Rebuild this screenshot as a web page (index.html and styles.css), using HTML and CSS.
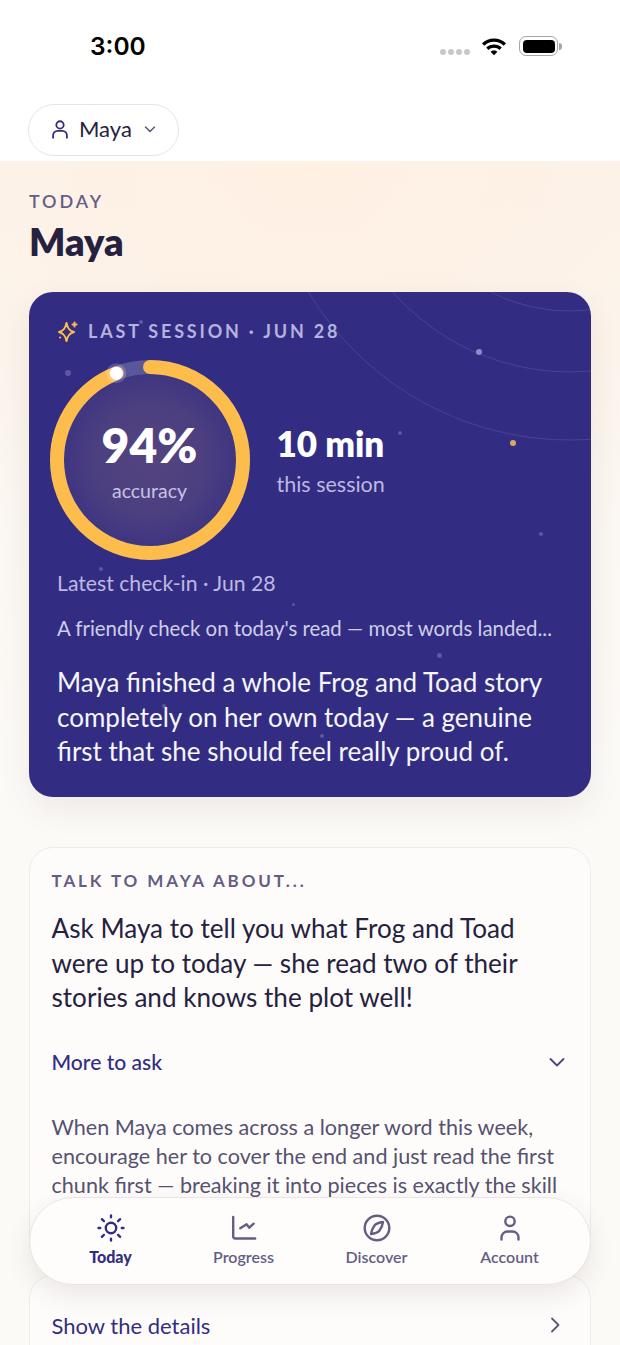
FILE: index.html
```html
<!DOCTYPE html>
<html lang="en">
<head>
    <meta charset="UTF-8">
    <meta name="viewport" content="width=device-width, initial-scale=1.0">
    <title>Today</title>
    <link rel="stylesheet" href="styles.css">
</head>
<body>
    <div class="screen">
        <div class="status-bar">
            <span class="clock">3:00</span>
            <div class="status-icons">
                <div class="signal"><i></i><i></i><i></i><i></i></div>
                <svg class="wifi" width="28" height="20" viewBox="0 0 28 20">
                    <path d="M14 2.500c4.600 0 8.800 1.800 12 4.800l-2.300 2.400C21.100 7.300 17.700 5.800 14 5.800S6.900 7.300 4.300 9.700L2 7.300c3.200-3 7.400-4.800 12-4.800z"/>
                    <path d="M14 8.500c3 0 5.700 1.100 7.800 3l-2.300 2.400c-1.500-1.300-3.400-2.100-5.500-2.100s-4 .8-5.500 2.100l-2.300-2.400c2.100-1.900 4.800-3 7.800-3z"/>
                    <path d="M14 14.500c1.300 0 2.500.5 3.400 1.300L14 19.300l-3.400-3.500c.9-.8 2.100-1.300 3.400-1.300z"/>
                </svg>
                <div class="battery"><div class="battery-fill"></div></div>
                <div class="battery-cap"></div>
            </div>
        </div>

        <header class="top-bar">
            <button class="child-pill">
                <svg width="22" height="22" viewBox="0 0 24 24" fill="none" stroke="#322d83" stroke-width="2" stroke-linecap="round">
                    <circle cx="12" cy="7.500" r="4"/>
                    <path d="M4.500 21.500v-2.500a5 5 0 0 1 5-5h5a5 5 0 0 1 5 5v2.500"/>
                </svg>
                <span>Maya</span>
                <svg width="14" height="14" viewBox="0 0 14 14" fill="none" stroke="#5c5778" stroke-width="1.500" stroke-linecap="round" stroke-linejoin="round">
                    <path d="M2.500 5l4.500 4.500L11.500 5"/>
                </svg>
            </button>
        </header>

        <main class="content">
            <p class="eyebrow">TODAY</p>
            <h1>Maya</h1>

            <section class="hero-card">
                <svg class="orbits" width="562" height="505" viewBox="0 0 562 505" fill="none" stroke="#fff" stroke-opacity="0.11">
                    <circle cx="541" cy="-157" r="176"/>
                    <circle cx="541" cy="-157" r="237"/>
                    <circle cx="541" cy="-157" r="305"/>
                </svg>
                <span class="star" style="left: 36px; top: 78px; width: 6px; height: 6px;"></span>
                <span class="star" style="left: 110px; top: 28px; width: 4px; height: 4px;"></span>
                <span class="star bright" style="left: 447px; top: 57px; width: 6px; height: 6px;"></span>
                <span class="star amber" style="left: 481px; top: 148px; width: 6px; height: 6px;"></span>
                <span class="star" style="left: 369px; top: 139px; width: 4px; height: 4px;"></span>
                <span class="star" style="left: 510px; top: 240px; width: 4px; height: 4px;"></span>
                <span class="star" style="left: 70px; top: 275px; width: 4px; height: 4px;"></span>
                <span class="star" style="left: 263px; top: 311px; width: 3px; height: 3px;"></span>
                <span class="star" style="left: 408px; top: 361px; width: 5px; height: 5px;"></span>
                <span class="star" style="left: 133px; top: 412px; width: 4px; height: 4px;"></span>
                <span class="star" style="left: 291px; top: 442px; width: 4px; height: 4px;"></span>

                <div class="hero-label">
                    <svg width="22" height="22" viewBox="0 0 22 22" fill="none" stroke="#fdbd4c" stroke-width="2" stroke-linejoin="round" stroke-linecap="round">
                        <path d="M9.500 3C10.500 8 12 10.500 17 12C12 13.500 10.500 16 9.500 21C8.500 16 7 13.500 2 12C7 10.500 8.500 8 9.500 3z"/>
                        <path d="M17.500 2.500v4M15.500 4.500h4"/>
                        <path d="M3 17.500h.1"/>
                    </svg>
                    <span>LAST SESSION · JUN 28</span>
                </div>

                <div class="hero-stats">
                    <div class="ring">
                        <svg width="200" height="200" viewBox="0 0 200 200" fill="none">
                            <defs>
                                <radialGradient id="ringCore">
                                    <stop offset="0" stop-color="#54437f"/>
                                    <stop offset="0.65" stop-color="#4c3f80"/>
                                    <stop offset="1" stop-color="#3f3581"/>
                                </radialGradient>
                            </defs>
                            <circle cx="100" cy="100" r="86" fill="url(#ringCore)"/>
                            <circle cx="100" cy="100" r="93" stroke="#fff" stroke-opacity="0.2" stroke-width="14"/>
                            <circle cx="100" cy="100" r="93" stroke="#fdbd4c" stroke-width="14" stroke-linecap="round" stroke-dasharray="549.3 584.3" transform="rotate(-90 100 100)"/>
                            <circle cx="66.300" cy="13.300" r="10" fill="#fff" fill-opacity="0.18"/>
                            <circle cx="66.300" cy="13.300" r="6.500" fill="#fff"/>
                        </svg>
                        <div class="ring-text">
                            <strong>94%</strong>
                            <span>accuracy</span>
                        </div>
                    </div>
                    <div class="session-time">
                        <strong>10 min</strong>
                        <span>this session</span>
                    </div>
                </div>

                <p class="checkin">Latest check-in · Jun 28</p>
                <p class="summary">A friendly check on today's read — most words landed...</p>
                <p class="highlight">Maya finished a whole Frog and Toad story<br>completely on her own today — a genuine<br>first that she should feel really proud of.</p>
            </section>

            <section class="card talk-card">
                <p class="card-label">TALK TO MAYA ABOUT...</p>
                <p class="talk-text">Ask Maya to tell you what Frog and Toad<br>were up to today — she read two of their<br>stories and knows the plot well!</p>
                <div class="more-row">
                    <span>More to ask</span>
                    <svg width="20" height="20" viewBox="0 0 20 20" fill="none" stroke="#4a4580" stroke-width="1.800" stroke-linecap="round" stroke-linejoin="round">
                        <path d="M3.500 7l6.500 6.500L16.500 7"/>
                    </svg>
                </div>
                <p class="more-text">When Maya comes across a longer word this week,<br>encourage her to cover the end and just read the first<br>chunk first — breaking it into pieces is exactly the skill<br>she has been practising.</p>
            </section>

            <section class="card details-card">
                <span>Show the details</span>
                <svg width="20" height="20" viewBox="0 0 20 20" fill="none" stroke="#5c5778" stroke-width="1.800" stroke-linecap="round" stroke-linejoin="round">
                    <path d="M7 3.500l6.500 6.500L7 16.500"/>
                </svg>
            </section>
        </main>

        <nav class="tab-bar">
            <div class="tab active">
                <svg width="28" height="28" viewBox="0 0 28 28" fill="none" stroke="currentColor" stroke-width="2.400" stroke-linecap="round">
                    <circle cx="14" cy="14" r="5.200"/>
                    <path d="M14 1.500v1.700M14 24.800v1.700M1.500 14h1.700M24.800 14h1.700M4.900 5.200l2 1.900M21.100 20.900l2 1.900M4.900 22.800l2-1.900M21.100 7.100l2-1.900"/>
                </svg>
                <span>Today</span>
            </div>
            <div class="tab">
                <svg width="28" height="28" viewBox="0 0 28 28" fill="none" stroke="currentColor" stroke-width="2.400" stroke-linecap="round" stroke-linejoin="round">
                    <path d="M3.200 3v19.500a2 2 0 0 0 2 2h20"/>
                    <path d="M10.300 14.300l6.300-4 2.700 3.400 4.400-4"/>
                </svg>
                <span>Progress</span>
            </div>
            <div class="tab">
                <svg width="28" height="28" viewBox="0 0 28 28" fill="none" stroke="currentColor" stroke-width="2.400" stroke-linejoin="round">
                    <circle cx="14" cy="14" r="12.300"/>
                    <path d="M20 8c-4 .5-7 1.500-8.500 3.500C10 13.500 8.500 16 8 20c4-.5 7-1.500 8.500-3.500C18 14.500 19.500 12 20 8z"/>
                </svg>
                <span>Discover</span>
            </div>
            <div class="tab">
                <svg width="28" height="28" viewBox="0 0 28 28" fill="none" stroke="currentColor" stroke-width="2.400" stroke-linecap="round">
                    <circle cx="14" cy="7.300" r="4.700"/>
                    <path d="M5.500 25.500v-2a6 6 0 0 1 6-6h5a6 6 0 0 1 6 6v2"/>
                </svg>
                <span>Account</span>
            </div>
        </nav>
    </div>
</body>
</html>
```

FILE: styles.css
```css
* {
    box-sizing: border-box;
    margin: 0;
    padding: 0;
}

body {
    font-family: 'Lato', 'Open Sans', sans-serif;
    background-color: #fff;
    color: #25213f;
}

.screen {
    position: relative;
    width: 620px;
    height: 1345px;
    overflow: hidden;
}

.status-bar {
    display: flex;
    justify-content: space-between;
    align-items: center;
    height: 92px;
    padding: 0 58px 0 90px;
}

.clock {
    font-family: 'Inter', sans-serif;
    font-size: 24.500px;
    font-weight: 600;
    color: #000;
}

.status-icons {
    display: flex;
    align-items: center;
}

.signal {
    display: flex;
    gap: 2px;
    margin: 12px 10px 0 0;
}

.signal i {
    width: 6px;
    height: 6px;
    border-radius: 50%;
    background-color: #c9c9c9;
}

.wifi {
    margin-right: 11px;
}

.battery {
    width: 39px;
    height: 20px;
    padding: 2.500px;
    border: 1.500px solid #a5a5a5;
    border-radius: 7px;
}

.battery-fill {
    height: 100%;
    background-color: #000;
    border-radius: 4px;
}

.battery-cap {
    width: 3px;
    height: 7px;
    margin-left: 1px;
    background-color: #a5a5a5;
    border-radius: 0 3px 3px 0;
}

.top-bar {
    height: 69px;
    padding: 12px 28px 0;
}

.child-pill {
    display: flex;
    align-items: center;
    gap: 8px;
    width: 151px;
    height: 52px;
    padding: 0 20px 3px;
    font-family: inherit;
    font-size: 22px;
    color: #25213f;
    background: #fff;
    border: 1.500px solid #e6e4e8;
    border-radius: 26px;
}

.child-pill span {
    margin-right: 3px;
}

.content {
    height: 1184px;
    padding: 30px 29px 0;
    background: radial-gradient(ellipse 480px 420px at 50% 0, #fff0e3, rgba(255, 240, 227, 0)), linear-gradient(#fbf3ea, #fcfaf7 620px);
}

.eyebrow {
    font-size: 18px;
    font-weight: 600;
    letter-spacing: 2.900px;
    line-height: 20px;
    color: #655d85;
}

h1 {
    margin-top: 5px;
    font-size: 38px;
    font-weight: 800;
    line-height: 50px;
    color: #25213f;
}

.hero-card {
    position: relative;
    height: 505px;
    margin-top: 26px;
    padding: 28px 28px 0;
    background-color: #322d83;
    border-radius: 24px;
    box-shadow: 0 12px 32px rgba(60, 40, 30, 0.08);
    overflow: hidden;
}

.orbits {
    position: absolute;
    left: 0;
    top: 0;
}

.star {
    position: absolute;
    border-radius: 50%;
    background-color: #5d58a0;
}

.star.bright {
    background-color: #8f8bc6;
}

.star.amber {
    background-color: #dca861;
}

.hero-label {
    position: relative;
    display: flex;
    align-items: center;
    gap: 9px;
    height: 22px;
    font-size: 18px;
    font-weight: 700;
    letter-spacing: 2.800px;
    color: #b4b2de;
}

.hero-stats {
    position: relative;
    display: flex;
    align-items: center;
    gap: 27px;
    margin: 18px 0 0 -7.500px;
}

.ring {
    position: relative;
    width: 200px;
    height: 200px;
}

.ring-text {
    position: absolute;
    inset: 0;
    display: flex;
    flex-direction: column;
    align-items: center;
    padding-top: 54px;
    color: #fff;
}

.ring-text strong {
    font-size: 48px;
    font-weight: 800;
    line-height: 62px;
}

.ring-text span {
    margin-top: 3px;
    font-size: 19.500px;
    color: #c6c3e3;
}

.session-time {
    display: flex;
    flex-direction: column;
    margin-top: -3px;
}

.session-time strong {
    font-size: 35px;
    font-weight: 800;
    line-height: 44px;
    color: #fff;
}

.session-time span {
    margin-top: 6px;
    font-size: 21.500px;
    color: #bdb9e0;
}

.checkin {
    position: relative;
    margin-top: 10px;
    font-size: 21.200px;
    line-height: 26px;
    color: #bdb9e0;
}

.summary {
    position: relative;
    margin-top: 20px;
    font-size: 20.400px;
    line-height: 24px;
    color: #cfcdea;
}

.highlight {
    position: relative;
    margin-top: 25px;
    font-size: 26px;
    line-height: 34.600px;
    color: #f6f5fb;
}

.card {
    background-color: #fefcfb;
    border: 1.500px solid #eeebe9;
    border-radius: 24px;
}

.talk-card {
    height: 420px;
    margin-top: 50px;
    padding: 22px 21.500px 0;
}

.card-label {
    font-size: 17px;
    font-weight: 700;
    letter-spacing: 2.900px;
    line-height: 22px;
    color: #655d85;
}

.talk-text {
    margin-top: 19px;
    font-size: 26.100px;
    line-height: 34.600px;
    color: #25213f;
}

.more-row {
    display: flex;
    justify-content: space-between;
    align-items: center;
    margin-top: 33px;
    padding-right: 2px;
    font-size: 21.100px;
    font-weight: 500;
    line-height: 28px;
    color: #322d83;
}

.more-text {
    margin-top: 37px;
    font-size: 21.600px;
    line-height: 29px;
    color: #57526f;
}

.details-card {
    display: flex;
    justify-content: space-between;
    align-items: center;
    height: 100px;
    margin-top: 8px;
    padding: 0 25px 0 21.500px;
    font-size: 22px;
    color: #322d83;
}

.tab-bar {
    position: absolute;
    left: 29px;
    top: 1197px;
    width: 562px;
    height: 88px;
    display: grid;
    grid-template-columns: repeat(4, 1fr);
    padding: 16px 14px 0;
    background-color: #fefdfc;
    border: 1px solid #e9e6e2;
    border-radius: 44px;
    box-shadow: 0 10px 26px rgba(60, 40, 30, 0.1);
}

.tab {
    display: flex;
    flex-direction: column;
    align-items: center;
    gap: 5px;
    font-size: 16px;
    font-weight: 600;
    line-height: 20px;
    color: #655d85;
}

.tab.active {
    color: #322d83;
    font-weight: 900;
}
```
